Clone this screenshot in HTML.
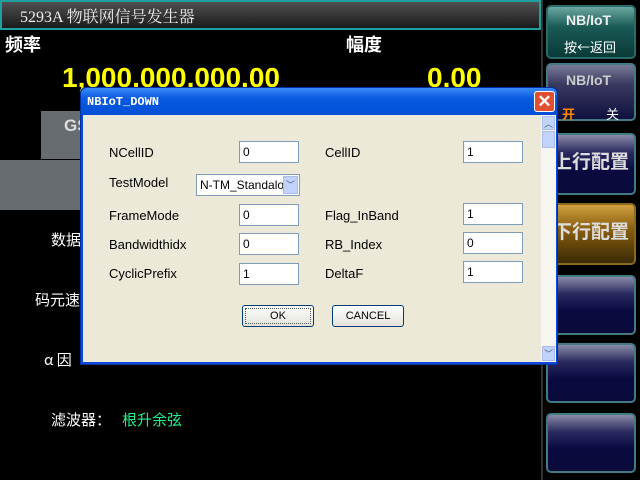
<!DOCTYPE html><html><head><meta charset="utf-8"><style>
*{margin:0;padding:0;box-sizing:border-box}
body{width:640px;height:480px;background:#000;position:relative;overflow:hidden;font-family:"Liberation Sans","Noto Sans CJK SC",sans-serif;color:#fff}
.a{position:absolute;white-space:nowrap}
.cn{font-family:"Noto Sans CJK SC","WenQuanYi Zen Hei",sans-serif}
.btn{position:absolute;left:546px;width:90px;border:2px solid #3f7b80;border-radius:5px;background:linear-gradient(#8a8aa8 0,#2a2a60 30%,#0a0a40 60%,#0a0a3a);}
.lbl{position:absolute;font-size:13px;color:#000}
.in{position:absolute;background:#fff;border:1px solid #7f9db9;font-size:12px;color:#000;padding:3px 0 0 3px;height:22px;width:60px}
</style></head><body>
<div class="a" style="left:0;top:0;width:541px;height:30px;border:2px solid #1fa0a0;background:linear-gradient(#505050,#1a1a1a)"></div>
<div class="a cn" style="left:20px;top:4px;font-size:16px;color:#eee;font-family:'Liberation Serif','Noto Serif CJK SC',serif">5293A 物联网信号发生器</div>
<div class="a" style="left:541px;top:0;width:2px;height:480px;background:#333"></div>
<div class="btn" style="top:5px;height:54px;background:linear-gradient(#6aa8a0 0,#1a5a55 40%,#0a3a38);border-color:#2a6a68"></div>
<div class="a" style="left:566px;top:12px;font-size:14px;font-weight:bold;color:#eee">NB/IoT</div>
<div class="a cn" style="left:564px;top:37px;font-size:13px">按←返回</div>
<div class="btn" style="top:63px;height:58px;background:linear-gradient(#7a7a9a 0,#3a3a60 35%,#101040)"></div>
<div class="a" style="left:566px;top:72px;font-size:14px;font-weight:bold;color:#ccc">NB/IoT</div>
<div class="a cn" style="left:562px;top:104px;font-size:13px;color:#f80;font-weight:bold">开</div>
<div class="a cn" style="left:606px;top:104px;font-size:13px">关</div>
<div class="btn" style="top:133px;height:62px"></div>
<div class="a cn" style="left:553px;top:147px;font-size:19px;font-weight:bold;color:#ddd">上行配置</div>
<div class="btn" style="top:203px;height:62px;background:linear-gradient(#d0a040 0,#8a6010 40%,#3a2a05);border-color:#8a6a20"></div>
<div class="a cn" style="left:553px;top:217px;font-size:19px;font-weight:bold;color:#ddd">下行配置</div>
<div class="btn" style="top:275px;height:60px"></div>
<div class="btn" style="top:343px;height:60px"></div>
<div class="btn" style="top:413px;height:60px"></div>

<div class="a cn" style="left:5px;top:31px;font-size:18px;font-weight:bold">频率</div>
<div class="a cn" style="left:346px;top:31px;font-size:18px;font-weight:bold">幅度</div>
<div class="a" style="left:62px;top:62px;font-size:28px;font-weight:bold;color:#ff0">1,000,000,000.00</div>
<div class="a" style="left:427px;top:62px;font-size:28px;font-weight:bold;color:#ff0">0.00</div>
<div class="a" style="left:41px;top:111px;width:45px;height:48px;background:#666c70"></div>
<div class="a" style="left:64px;top:116px;font-size:17px;font-weight:bold;color:#ddd">GS</div>
<div class="a" style="left:0;top:160px;width:85px;height:50px;background:#666c70"></div>
<div class="a cn" style="left:51px;top:229px;font-size:15px">数据</div>
<div class="a cn" style="left:35px;top:289px;font-size:15px">码元速</div>
<div class="a cn" style="left:44px;top:349px;font-size:15px">α 因</div>
<div class="a cn" style="left:51px;top:409px;font-size:15px">滤波器：</div>
<div class="a cn" style="left:122px;top:409px;font-size:15px;color:#2e8">根升余弦</div>

<div class="a" style="left:80px;top:87px;width:478px;height:278px;background:#0a4ad8;border-radius:6px 6px 0 0;border:1px solid #0030a0"></div>
<div class="a" style="left:81px;top:88px;width:476px;height:26px;border-radius:6px 6px 0 0;background:linear-gradient(#3a8af8,#0a5ae0 40%,#0050d8)"></div>
<div class="a" style="left:87px;top:95px;font-size:12px;font-weight:bold;font-family:'Liberation Mono',monospace">NBIoT_DOWN</div>
<div class="a" style="left:534px;top:91px;width:21px;height:21px;background:#e05030;border:1px solid #fff;border-radius:3px;color:#fff;font-size:17px;text-align:center;line-height:19px;font-weight:bold">✕</div>
<div class="a" style="left:83px;top:115px;width:472px;height:247px;background:#ece9d8"></div>
<div class="a" style="left:541px;top:115px;width:15px;height:247px;background:#f6f5ef"></div>
<div class="a" style="left:542px;top:116px;width:13px;height:14px;background:#c1d3fb;border:1px solid #aabbea;font-size:9px;color:#4d6185;text-align:center">︿</div>
<div class="a" style="left:542px;top:131px;width:13px;height:17px;background:#c1d3fb;border:1px solid #aabbea"></div>
<div class="a" style="left:542px;top:346px;width:13px;height:15px;background:#c1d3fb;border:1px solid #aabbea;font-size:9px;color:#4d6185;text-align:center">﹀</div>

<div class="lbl" style="left:109px;top:145px">NCellID</div><div class="in" style="left:239px;top:141px">0</div>
<div class="lbl" style="left:325px;top:145px">CellID</div><div class="in" style="left:463px;top:141px">1</div>
<div class="lbl" style="left:109px;top:175px">TestModel</div>
<div class="in" style="left:196px;top:174px;width:104px;overflow:hidden">N-TM_Standalone</div>
<div class="a" style="left:283px;top:176px;width:15px;height:18px;background:#c1d3fb;border:1px solid #aabbea;font-size:9px;color:#4d6185;text-align:center;line-height:16px">﹀</div>
<div class="lbl" style="left:109px;top:208px">FrameMode</div><div class="in" style="left:239px;top:204px">0</div>
<div class="lbl" style="left:325px;top:208px">Flag_InBand</div><div class="in" style="left:463px;top:203px">1</div>
<div class="lbl" style="left:109px;top:237px">Bandwidthidx</div><div class="in" style="left:239px;top:233px">0</div>
<div class="lbl" style="left:325px;top:237px">RB_Index</div><div class="in" style="left:463px;top:232px">0</div>
<div class="lbl" style="left:109px;top:266px">CyclicPrefix</div><div class="in" style="left:239px;top:263px">1</div>
<div class="lbl" style="left:325px;top:266px">DeltaF</div><div class="in" style="left:463px;top:261px">1</div>
<div class="a" style="left:242px;top:305px;width:72px;height:22px;border:1px solid #003c74;border-radius:3px;background:linear-gradient(#fff,#e3e2da);font-size:11px;color:#000;text-align:center;line-height:20px;outline:1px dotted #555;outline-offset:-4px">OK</div>
<div class="a" style="left:332px;top:305px;width:72px;height:22px;border:1px solid #003c74;border-radius:3px;background:linear-gradient(#fff,#e3e2da);font-size:11px;color:#000;text-align:center;line-height:20px">CANCEL</div>
</body></html>
